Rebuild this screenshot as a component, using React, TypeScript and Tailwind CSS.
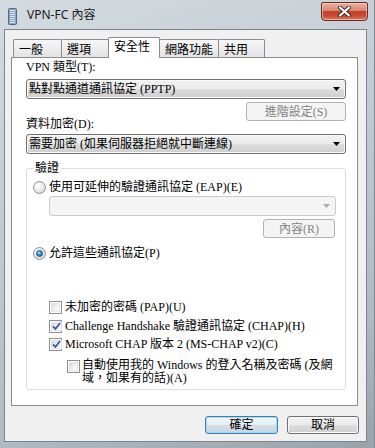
import React from "react";

const btnGrad =
  "bg-[linear-gradient(to_bottom,#f2f2f2_0%,#ebebeb_50%,#dddddd_51%,#cfcfcf_100%)]";

function Arrow({ color = "#000" }: { color?: string }) {
  return (
    <svg width="7" height="4" viewBox="0 0 7 4" className="shrink-0">
      <polygon points="0,0 7,0 3.5,4" fill={color} />
    </svg>
  );
}

function Combo({ text }: { text: string }) {
  return (
    <div
      className={`h-[20px] w-full flex items-center justify-between pl-[2px] pr-[5px] border border-[#707070] rounded-[3px] ${btnGrad} shadow-[inset_0_0_0_1px_#fafafa]`}
    >
      <span className="leading-[14px] whitespace-nowrap">{text}</span>
      <Arrow />
    </div>
  );
}

function DisabledButton({ text, w }: { text: string; w: string }) {
  return (
    <div
      className={`${w} flex items-center justify-center border border-[#adb2b5] rounded-[3px] bg-[#f4f4f4] text-[#838383] leading-[14px]`}
    >
      {text}
    </div>
  );
}

function Radio({ checked }: { checked?: boolean }) {
  return (
    <span className="w-[13px] h-[13px] rounded-full border border-[#8f8f8f] bg-[radial-gradient(circle_at_35%_35%,#ffffff_0%,#e6e6e6_55%,#c9c9c9_100%)] flex items-center justify-center shrink-0">
      {checked && (
        <span className="w-[7px] h-[7px] rounded-full bg-[radial-gradient(circle_at_40%_35%,#bfe9ff_0%,#3a9be0_40%,#0b4f94_100%)] border border-[#1a4f80]" />
      )}
    </span>
  );
}

function Check({ checked }: { checked?: boolean }) {
  return (
    <span className="w-[13px] h-[13px] border border-[#8f8f8f] bg-white p-[1px] shrink-0 flex">
      <span className="flex-1 border border-[#e3e3e3] bg-[linear-gradient(135deg,#d8d8d8_0%,#f4f4f4_60%,#ffffff_100%)] flex items-center justify-center">
        {checked && (
          <svg width="9" height="9" viewBox="0 0 9 9">
            <path
              d="M1 4.5 L3.5 7 L8 1"
              fill="none"
              stroke="#3b5aa0"
              strokeWidth="1.8"
            />
          </svg>
        )}
      </span>
    </span>
  );
}

function Tab({
  label,
  w,
  selected,
}: {
  label: string;
  w: string;
  selected?: boolean;
}) {
  if (selected) {
    return (
      <div
        className={`${w} h-[21px] -mb-[1px] -ml-[1px] relative z-10 bg-white border-l border-t border-r border-[#898c95] rounded-t-[2px] pl-[5px] pt-[2px] leading-[14px]`}
      >
        {label}
      </div>
    );
  }
  return (
    <div
      className={`${w} h-[18px] -ml-[1px] first:ml-0 bg-linear-to-b from-[#f7f7f7] to-[#e3e3e3] border-l border-t border-r border-[#898c95] rounded-t-[2px] pl-[5px] pt-[3px] leading-[14px]`}
    >
      {label}
    </div>
  );
}

export default function App() {
  return (
    <div className="w-[375px] h-[448px] overflow-hidden flex flex-col bg-[linear-gradient(160deg,#d3dae0_0%,#c3cbd2_40%,#b2bac2_75%,#9aa2aa_100%)] border-r border-[#7f878f] text-[12px] text-black font-['Liberation_Serif','Noto_Sans_CJK_TC',serif]">
      {/* Title bar */}
      <div className="h-[29px] flex items-start shrink-0">
        <svg width="9" height="17" viewBox="0 0 9 17" className="ml-[8px] mt-[8px] shrink-0">
          <rect x="0.5" y="0.5" width="8" height="16" rx="1" fill="#8aa4c2" stroke="#4f6784" />
          <rect x="2" y="2" width="5" height="1" fill="#dbe6f2" />
          <rect x="2" y="4" width="5" height="1" fill="#dbe6f2" />
          <rect x="2" y="6" width="5" height="1" fill="#dbe6f2" />
          <rect x="2" y="8" width="5" height="1" fill="#dbe6f2" />
          <rect x="2" y="10" width="5" height="1" fill="#dbe6f2" />
          <rect x="2" y="12" width="5" height="1" fill="#dbe6f2" />
          <rect x="2" y="14" width="5" height="1" fill="#dbe6f2" />
        </svg>
        <span className="ml-[10px] mt-[7px] leading-[16px] text-[12px] text-[#1b1b1b] font-['Noto_Sans','Noto_Sans_CJK_TC',sans-serif]">
          VPN-FC 內容
        </span>
        <div className="ml-auto mt-[2px] mr-[6px] w-[47px] h-[19px] rounded-b-[4px] rounded-t-[2px] border border-[#6e2a1e] bg-[linear-gradient(to_bottom,#e9b2a5_0%,#d88672_45%,#c2412a_50%,#c84a32_75%,#e07b62_100%)] shadow-[inset_0_0_0_1px_rgba(255,220,210,0.55)] flex items-center justify-center">
          <svg width="13" height="11" viewBox="0 0 13 11">
            <path d="M2 1.5 L11 9.5 M11 1.5 L2 9.5" stroke="#3a2a28" strokeWidth="4" strokeLinecap="round" />
            <path d="M2 1.5 L11 9.5 M11 1.5 L2 9.5" stroke="#ffffff" strokeWidth="2.2" strokeLinecap="round" />
          </svg>
        </div>
      </div>

      {/* Client area */}
      <div className="ml-[4px] mr-[7px] mb-[6px] flex-1 border border-[#7b858f] bg-[#f0f0f0] flex flex-col">
        {/* Tabs */}
        <div className="mt-[7px] ml-[8px] h-[20px] flex items-end">
          <Tab label="一般" w="w-[49px]" />
          <Tab label="選項" w="w-[48px]" />
          <Tab label="安全性" w="w-[52px]" selected />
          <Tab label="網路功能" w="w-[60px]" />
          <Tab label="共用" w="w-[47px]" />
        </div>

        {/* Panel */}
        <div className="ml-[6px] w-[347px] h-[349px] border border-[#898c95] bg-white pl-[14px] pr-[11px] flex flex-col">
          <div className="mt-[1px] h-[16px] leading-[16px]">VPN 類型(T):</div>
          <div className="mt-[4px]">
            <Combo text="點對點通道通訊協定 (PPTP)" />
          </div>
          <div className="mt-[3px] flex justify-end">
            <div className="h-[19px] flex">
              <DisabledButton text="進階設定(S)" w="w-[100px]" />
            </div>
          </div>
          <div className="-mt-[4px] h-[14px] leading-[14px]">資料加密(D):</div>
          <div className="mt-[3px]">
            <Combo text="需要加密 (如果伺服器拒絕就中斷連線)" />
          </div>

          <fieldset className="mt-[7px] border border-[#d5dfe5] rounded-[3px] pl-[6px] pr-[9px] pb-[4px] flex flex-col">
            <legend className="px-[2px] leading-[14px]">驗證</legend>
            <div className="mt-[4px] h-[16px] flex items-center gap-[3px]">
              <Radio />
              <span className="leading-[16px]">使用可延伸的驗證通訊協定 (EAP)(E)</span>
            </div>
            <div className="mt-[1px] ml-[16px] h-[20px] border border-[#c9cdd0] rounded-[3px] bg-[#f4f4f4] flex items-center justify-end pr-[5px]">
              <Arrow color="#a8acb0" />
            </div>
            <div className="mt-[3px] flex justify-end pr-[1px]">
              <div className="h-[19px] flex">
                <DisabledButton text="內容(R)" w="w-[72px]" />
              </div>
            </div>
            <div className="mt-[7px] h-[16px] flex items-center gap-[3px]">
              <Radio checked />
              <span className="leading-[16px]">允許這些通訊協定(P)</span>
            </div>
            <div className="mt-[38px] ml-[16px] h-[16px] flex items-center gap-[3px]">
              <Check />
              <span className="leading-[16px]">未加密的密碼 (PAP)(U)</span>
            </div>
            <div className="mt-[3px] ml-[16px] h-[16px] flex items-center gap-[3px]">
              <Check checked />
              <span className="leading-[16px]">Challenge Handshake 驗證通訊協定 (CHAP)(H)</span>
            </div>
            <div className="mt-[2px] ml-[16px] h-[16px] flex items-center gap-[3px]">
              <Check checked />
              <span className="leading-[16px]">Microsoft CHAP 版本 2 (MS-CHAP v2)(C)</span>
            </div>
            <div className="mt-[7px] ml-[34px] flex items-start gap-[2px]">
              <span className="mt-[1px] flex">
                <Check />
              </span>
              <div className="flex flex-col">
                <span className="h-[13px] leading-[13px] whitespace-nowrap">
                  自動使用我的 Windows 的登入名稱及密碼 (及網
                </span>
                <span className="h-[13px] leading-[13px] whitespace-nowrap">
                  域，如果有的話)(A)
                </span>
              </div>
            </div>
          </fieldset>
        </div>

        {/* Bottom buttons */}
        <div className="mt-[10px] pr-[7px] flex justify-end gap-[9px]">
          <div className="w-[73px] h-[18px] border border-[#3c7fb1] rounded-[3px] bg-[linear-gradient(to_bottom,#f0f6fa_0%,#e6eef4_50%,#d4dfe7_51%,#c9d6df_100%)] shadow-[inset_0_0_0_1px_#9fdcf5] flex items-center justify-center leading-[14px]">
            確定
          </div>
          <div className={`w-[72px] h-[18px] border border-[#707070] rounded-[3px] ${btnGrad} shadow-[inset_0_0_0_1px_#fafafa] flex items-center justify-center leading-[14px]`}>
            取消
          </div>
        </div>
      </div>
    </div>
  );
}
